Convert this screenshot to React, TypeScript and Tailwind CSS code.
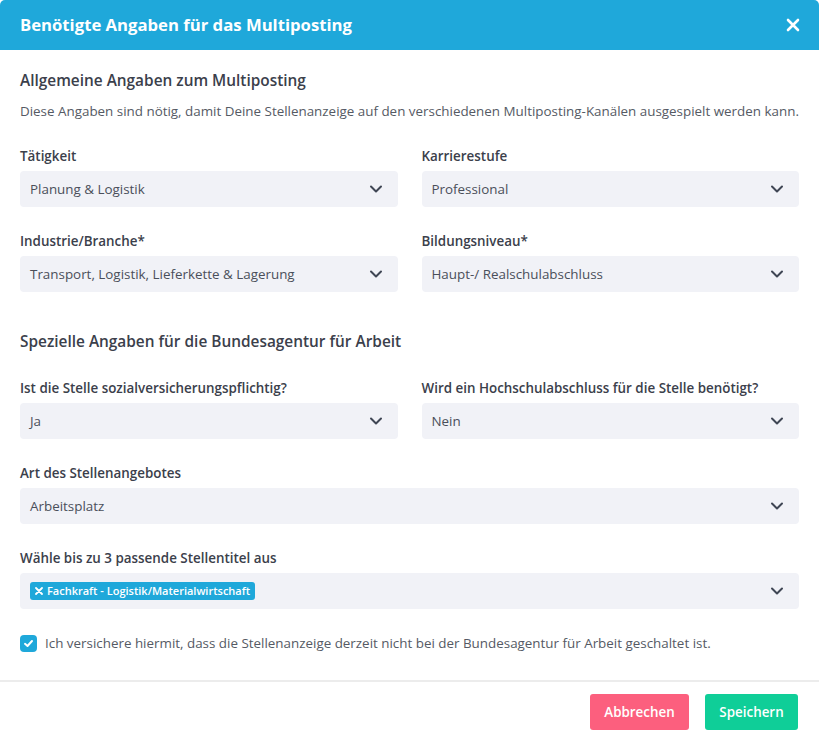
import React from "react";

const Chevron = () => (
  <svg width="16" height="16" viewBox="0 0 16 16" fill="none" className="shrink-0">
    <path d="M3 5.5 L8 10.5 L13 5.5" stroke="#3f4654" strokeWidth="2" strokeLinecap="round" strokeLinejoin="round" />
  </svg>
);

const Select = ({ value, children }: { value?: string; children?: React.ReactNode }) => (
  <div className="h-[36px] bg-[#f1f2f7] rounded-[4px] flex items-center pl-[10px] pr-[14px] justify-between">
    <div className="text-[13.4px] text-[#4a4f5a] flex items-center">{children ?? value}</div>
    <Chevron />
  </div>
);

const Field = ({ label, value, children }: { label: string; value?: string; children?: React.ReactNode }) => (
  <div className="flex flex-col">
    <div className="text-[13.4px] font-semibold text-[#3b404b] leading-[18px] mb-[6px]">{label}</div>
    <Select value={value}>{children}</Select>
  </div>
);

export default function App() {
  return (
    <div className="w-[819px] h-[742px] bg-white" style={{ fontFamily: "'Open Sans', 'Noto Sans', sans-serif" }}>
      <div className="h-[50px] bg-[#1fa8da] rounded-t-[5px] flex items-center justify-between pl-[20px] pr-[19px]">
        <div className="text-white font-bold text-[16.7px]">Benötigte Angaben für das Multiposting</div>
        <svg width="14" height="14" viewBox="0 0 14 14">
          <path d="M2 2 L12 12 M12 2 L2 12" stroke="white" strokeWidth="2.6" strokeLinecap="round" />
        </svg>
      </div>
      <div className="px-[20px] pt-[21px]">
        <div className="text-[15.4px] font-semibold text-[#3b404b] leading-[20px]">Allgemeine Angaben zum Multiposting</div>
        <div className="text-[13.4px] text-[#555a64] mt-[11px] leading-[18px] whitespace-nowrap">
          Diese Angaben sind nötig, damit Deine Stellenanzeige auf den verschiedenen Multiposting-Kanälen ausgespielt werden kann.
        </div>
        <div className="grid grid-cols-2 gap-x-[24px] gap-y-[25px] mt-[27px]">
          <Field label="Tätigkeit" value="Planung & Logistik" />
          <Field label="Karrierestufe" value="Professional" />
          <Field label="Industrie/Branche*" value="Transport, Logistik, Lieferkette & Lagerung" />
          <Field label="Bildungsniveau*" value="Haupt-/ Realschulabschluss" />
        </div>
        <div className="text-[15.4px] font-semibold text-[#3b404b] leading-[20px] mt-[40px]">Spezielle Angaben für die Bundesagentur für Arbeit</div>
        <div className="grid grid-cols-2 gap-x-[24px] mt-[27px]">
          <Field label="Ist die Stelle sozialversicherungspflichtig?" value="Ja" />
          <Field label="Wird ein Hochschulabschluss für die Stelle benötigt?" value="Nein" />
        </div>
        <div className="mt-[25px]">
          <Field label="Art des Stellenangebotes" value="Arbeitsplatz" />
        </div>
        <div className="mt-[25px]">
          <Field label="Wähle bis zu 3 passende Stellentitel aus">
            <span className="bg-[#1fa8da] text-white text-[11px] font-semibold rounded-[3px] h-[18px] px-[5px] flex items-center gap-[4px]">
              <svg width="8" height="8" viewBox="0 0 8 8">
                <path d="M1 1 L7 7 M7 1 L1 7" stroke="white" strokeWidth="1.8" strokeLinecap="round" />
              </svg>
              Fachkraft - Logistik/Materialwirtschaft
            </span>
          </Field>
        </div>
        <div className="flex items-center mt-[25px] gap-[8px]">
          <div className="w-[17px] h-[17px] rounded-[4px] bg-[#1fa8da] flex items-center justify-center">
            <svg width="11" height="11" viewBox="0 0 11 11">
              <path d="M2 5.8 L4.5 8 L9 3" stroke="white" strokeWidth="2" fill="none" strokeLinecap="round" strokeLinejoin="round" />
            </svg>
          </div>
          <div className="text-[13.4px] text-[#555a64] leading-[18px]">
            Ich versichere hiermit, dass die Stellenanzeige derzeit nicht bei der Bundesagentur für Arbeit geschaltet ist.
          </div>
        </div>
      </div>
      <div className="border-t-2 border-[#ececec] mt-[28px] flex justify-end gap-[16px] pr-[21px] pt-[12px]">
        <button className="h-[36px] w-[99px] bg-[#fc5f7e] text-white text-[13.4px] font-semibold rounded-[3px]">Abbrechen</button>
        <button className="h-[36px] w-[93px] bg-[#0fce98] text-white text-[13.4px] font-semibold rounded-[3px]">Speichern</button>
      </div>
    </div>
  );
}
